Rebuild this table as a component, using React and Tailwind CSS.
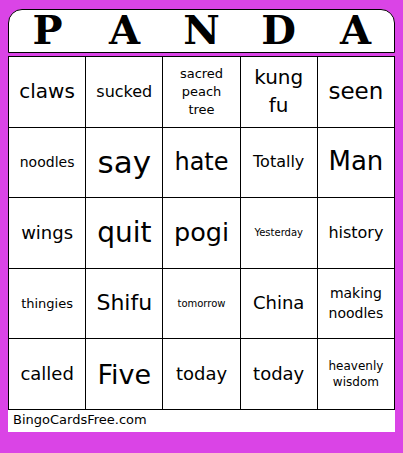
import React from "react";

const header = ["P", "A", "N", "D", "A"];

// each cell: lines of text and the font size it was fitted to
const cells = [
  [["claws"], 20], [["sucked"], 16], [["sacred", "peach", "tree"], 13], [["kung", "fu"], 20], [["seen"], 23],
  [["noodles"], 14], [["say"], 31], [["hate"], 24], [["Totally"], 16], [["Man"], 26],
  [["wings"], 18], [["quit"], 28], [["pogi"], 25.5], [["Yesterday"], 10], [["history"], 16],
  [["thingies"], 13], [["Shifu"], 22], [["tomorrow"], 10], [["China"], 18], [["making", "noodles"], 14],
  [["called"], 18], [["Five"], 27], [["today"], 18], [["today"], 18], [["heavenly", "wisdom"], 12],
];

const Cell = ({ lines, size }) => (
  <div className="flex items-center justify-center border-r border-b border-black text-center text-black leading-[1.38]">
    <div style={{ fontSize: size }}>
      {lines.map((l, i) => (
        <div key={i}>{l}</div>
      ))}
    </div>
  </div>
);

export default function App() {
  return (
    <div className="min-h-[453px] w-[403px] bg-[#da44e6] pt-[9px] pl-[8px] font-['DejaVu_Sans',sans-serif]">
      <div className="w-[387px]">
        {/* Title */}
        <div className="grid h-[44px] grid-cols-5 rounded-t-[14px] border border-black bg-white">
          {header.map((h, i) => (
            <div
              key={i}
              className="flex items-center justify-center pb-[2px] font-['DejaVu_Serif',serif] text-[40px] font-bold leading-none text-black"
            >
              {h}
            </div>
          ))}
        </div>

        {/* Board */}
        <div className="mt-[3px] grid h-[354px] grid-cols-5 grid-rows-5 border-t border-l border-black bg-white">
          {cells.map(([lines, size], i) => (
            <Cell key={i} lines={lines} size={size} />
          ))}
        </div>

        {/* Footer */}
        <div className="h-[22px] bg-white pl-[5px] pt-[1px] text-[13px] leading-[18px] text-black">
          BingoCardsFree.com
        </div>
      </div>
    </div>
  );
}
